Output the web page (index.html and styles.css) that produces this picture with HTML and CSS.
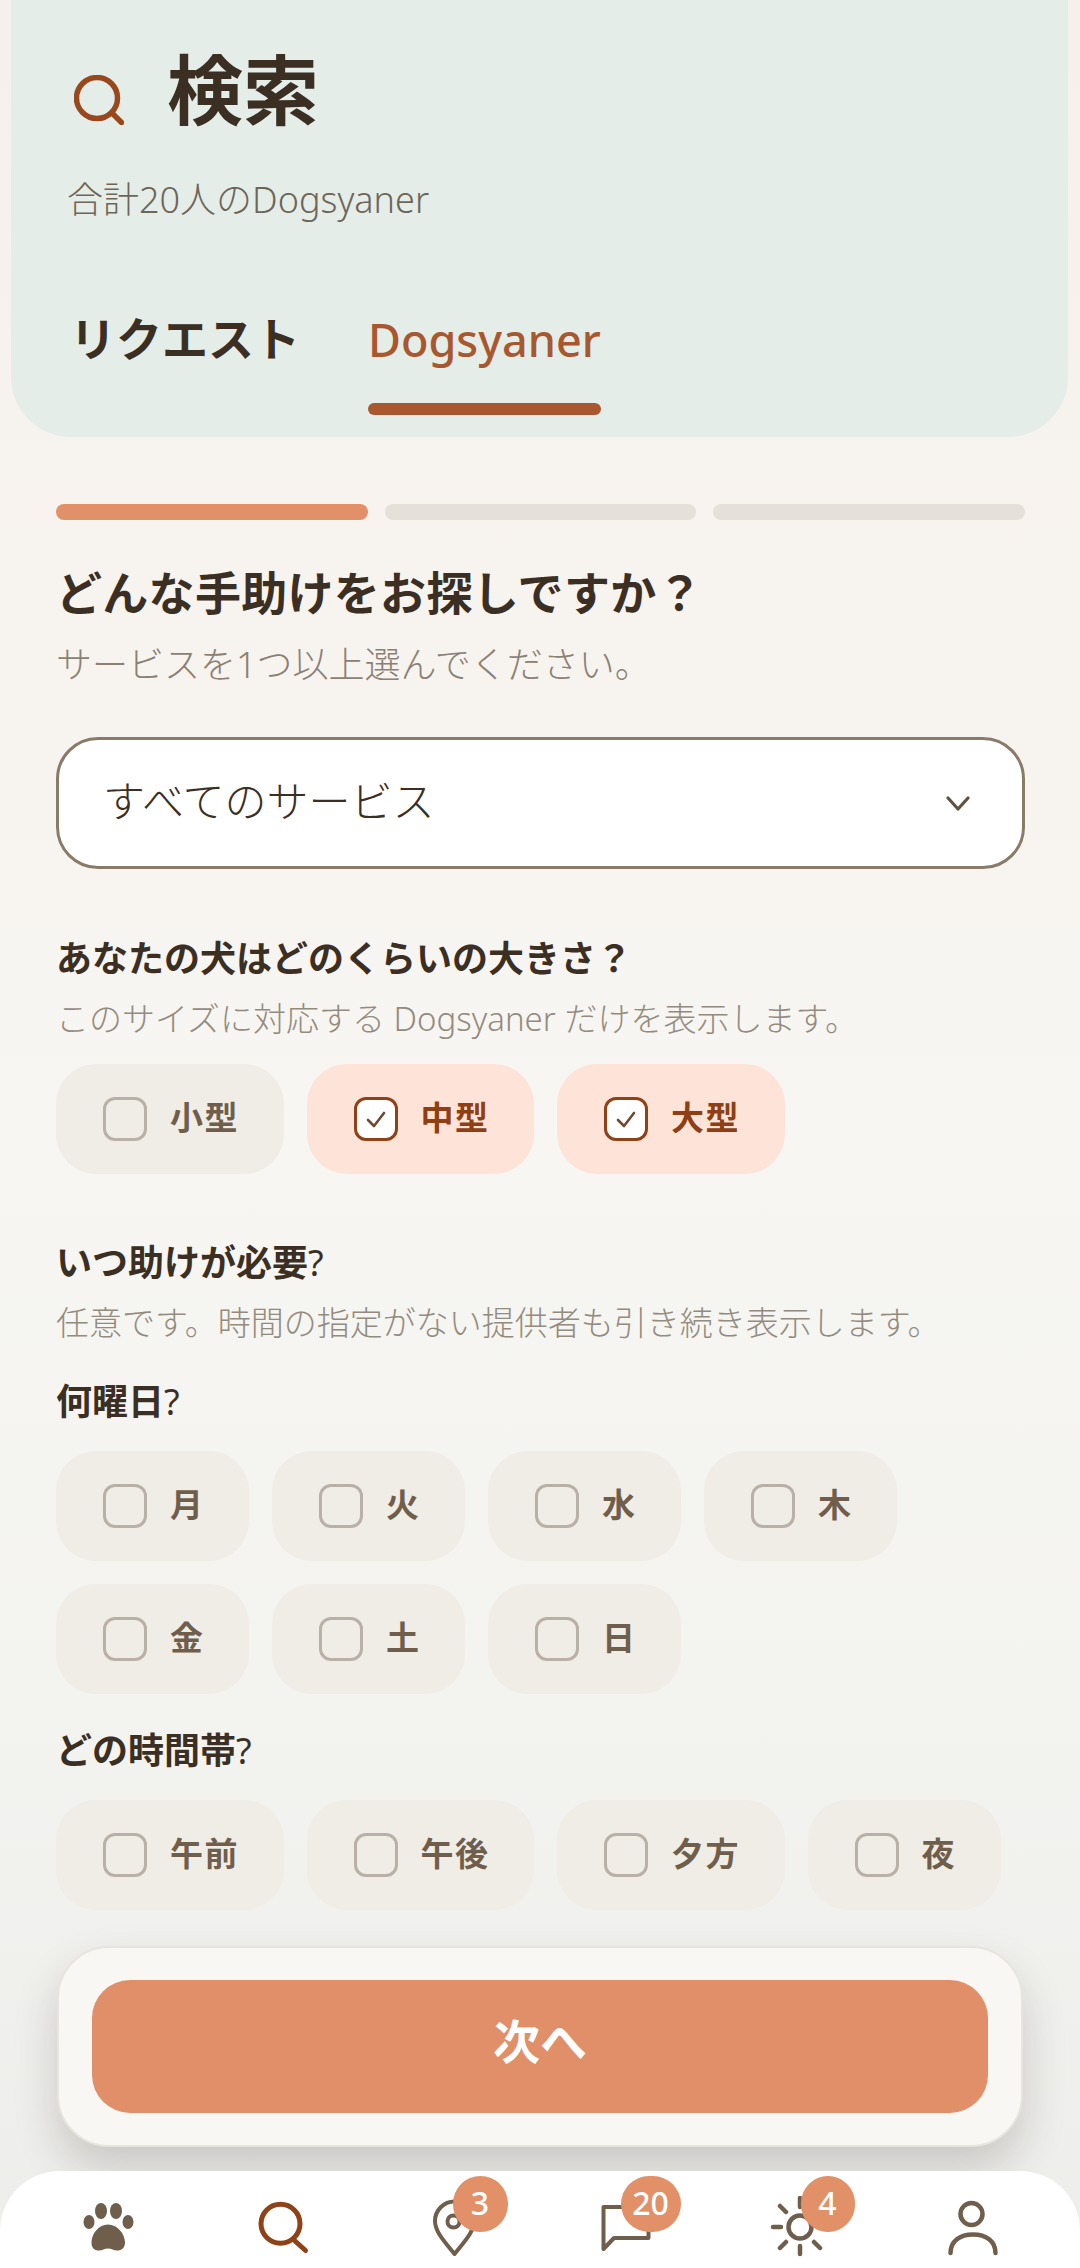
FILE: index.html
```html
<!DOCTYPE html>
<html lang="ja">
<head>
<meta charset="utf-8">
<title>検索</title>
<link rel="stylesheet" href="styles.css">
</head>
<body>
<div class="app">
  <header class="hero">
    <div class="hero-title">
      <svg class="hero-icon" viewBox="0 0 50 50" width="50" height="50"><circle cx="23" cy="23" r="20.5" fill="none" stroke="#98481C" stroke-width="5.5"/><path d="M38 38 47.500 47.500" fill="none" stroke="#98481C" stroke-width="5.500" stroke-linecap="round"/></svg>
      <h1>検索</h1>
    </div>
    <p class="hero-sub">合計20人のDogsyaner</p>
    <div class="tabs">
      <div class="tab">リクエスト</div>
      <div class="tab tab-active">Dogsyaner</div>
    </div>
  </header>

  <main class="form">
    <div class="steps">
      <span class="step step-on"></span>
      <span class="step"></span>
      <span class="step"></span>
    </div>

    <h2 class="form-title">どんな手助けをお探しですか？</h2>
    <p class="form-sub">サービスを1つ以上選んでください。</p>

    <div class="select">
      <span class="select-value">すべてのサービス</span>
      <svg viewBox="0 0 24 15" width="24" height="15"><path d="M2 2 12 13 22 2" fill="none" stroke="#5F5345" stroke-width="3.2" stroke-linecap="round" stroke-linejoin="round"/></svg>
    </div>

    <h3 class="q q-size">あなたの犬はどのくらいの大きさ？</h3>
    <p class="hint">このサイズに対応する Dogsyaner だけを表示します。</p>
    <div class="chips chips-size">
      <label class="chip"><i class="box"></i>小型</label>
      <label class="chip chip-on"><i class="box"><svg viewBox="0 0 24 24" width="24" height="24"><path d="M4 13 10 19 20 6" fill="none" stroke="#6F4A30" stroke-width="2.6" stroke-linecap="round" stroke-linejoin="round"/></svg></i>中型</label>
      <label class="chip chip-on"><i class="box"><svg viewBox="0 0 24 24" width="24" height="24"><path d="M4 13 10 19 20 6" fill="none" stroke="#6F4A30" stroke-width="2.6" stroke-linecap="round" stroke-linejoin="round"/></svg></i>大型</label>
    </div>

    <h3 class="q q-when">いつ助けが必要<span class="qm">?</span></h3>
    <p class="hint">任意です。時間の指定がない提供者も引き続き表示します。</p>

    <h3 class="q q-day">何曜日<span class="qm">?</span></h3>
    <div class="chips chips-days">
      <label class="chip"><i class="box"></i>月</label>
      <label class="chip"><i class="box"></i>火</label>
      <label class="chip"><i class="box"></i>水</label>
      <label class="chip"><i class="box"></i>木</label>
      <label class="chip"><i class="box"></i>金</label>
      <label class="chip"><i class="box"></i>土</label>
      <label class="chip"><i class="box"></i>日</label>
    </div>

    <h3 class="q q-time">どの時間帯<span class="qm">?</span></h3>
    <div class="chips chips-time">
      <label class="chip"><i class="box"></i>午前</label>
      <label class="chip"><i class="box"></i>午後</label>
      <label class="chip"><i class="box"></i>夕方</label>
      <label class="chip"><i class="box"></i>夜</label>
    </div>

    <div class="action-card">
      <button class="next" type="button">次へ</button>
    </div>
  </main>

  <nav class="nav">
    <div class="nav-item">
      <svg viewBox="0 0 64 64" width="64" height="64" fill="#6F5E4C"><ellipse cx="13" cy="26" rx="5.5" ry="7"/><ellipse cx="25" cy="15" rx="6" ry="8"/><ellipse cx="40" cy="15" rx="6" ry="8"/><ellipse cx="52" cy="26" rx="5.5" ry="7"/><path d="M32 28.500c9 0 17 9 17 18 0 5.500-3.500 8-8 8-3.500 0-5.500-2-9-2s-5.500 2-9 2c-4.500 0-7.500-2.500-7.500-8 0-9 7.500-18 16.500-18Z"/></svg>
    </div>
    <div class="nav-item">
      <svg viewBox="0 0 64 64" width="64" height="64" fill="none" stroke="#8F4218" stroke-width="5" stroke-linecap="round"><circle cx="31.500" cy="27.700" r="19.500"/><path d="M46 45 56.500 54.500"/></svg>
    </div>
    <div class="nav-item">
      <svg viewBox="0 0 64 64" width="64" height="64" fill="none" stroke="#6F5E4C" stroke-width="4" stroke-linejoin="round"><path d="M32.500 58C23 46 13 36 13 25a19.500 19.500 0 0 1 39 0C52 36 42 46 32.500 58Z"/><circle cx="31.500" cy="25.500" r="6"/></svg>
      <span class="badge badge-pin">3</span>
    </div>
    <div class="nav-item">
      <svg viewBox="0 0 64 64" width="64" height="64" fill="none" stroke="#6F5E4C" stroke-width="4" stroke-linejoin="round"><path d="M8.500 53V11H53.500V42H19Z"/></svg>
      <span class="badge badge-chat">20</span>
    </div>
    <div class="nav-item">
      <svg viewBox="0 0 64 64" width="64" height="64" fill="none" stroke="#6F5E4C" stroke-width="4.500" stroke-linecap="round"><circle cx="32" cy="31" r="11.500"/><path d="M32 2V11M32 50V58M5 31H13M51 31H59M12 10 18 16M46 46 52 52M12 52 18 46M46 16 52 10"/></svg>
      <span class="badge badge-sun">4</span>
    </div>
    <div class="nav-item">
      <svg viewBox="0 0 64 64" width="64" height="64" fill="none" stroke="#6F5E4C" stroke-width="4.500" stroke-linecap="round"><circle cx="30.500" cy="18" r="11"/><path d="M9.500 57C9.500 45 19 38.500 32 38.500S54.500 45 54.500 57"/></svg>
    </div>
  </nav>
</div>
</body>
</html>
```
FILE: styles.css
```css
* { box-sizing: border-box; }

html, body { margin: 0; padding: 0; }

body {
  width: 1080px;
  height: 2268px;
  overflow: hidden;
  font-family: "Noto Sans", "Noto Sans CJK JP", sans-serif;
  color: #3B2F24;
  background: linear-gradient(180deg, #F6F0EC 0%, #F7F3EF 25%, #F7F6F2 50%, #F3F3F0 75%, #EDEDEB 100%);
}

.app { display: flex; flex-direction: column; height: 2268px; }

h1, h2, h3, p { margin: 0; }

/* Header panel */
.hero {
  margin: 0 12px 0 11px;
  height: 437px;
  padding: 50px 0 0 56px;
  background: #E5EDE8;
  border-radius: 0 0 60px 60px;
}

.hero-title { display: flex; align-items: center; gap: 43px; height: 80px; padding-left: 7px; }
.hero-icon { margin-top: 20px; }
.hero-title h1 { font-size: 76px; font-weight: 700; line-height: 80px; }

.hero-sub { margin-top: 45px; font-size: 36px; line-height: 50px; font-weight: 300; color: #6E6558; }

.tabs { display: flex; gap: 68px; margin-top: 83px; padding-left: 3px; }
.tab { height: 107px; font-size: 46px; line-height: 60px; font-weight: 700; position: relative; }
.tab-active { font-size: 45px; line-height: 64px; font-weight: 500; color: #A9572E; }
.tab-active::after {
  content: "";
  position: absolute;
  left: 0;
  right: 0;
  top: 95px;
  height: 12px;
  border-radius: 6px;
  background: #A9572E;
}

/* Form column */
.form { flex: 1; padding: 67px 55px 0 56px; }

.steps { display: grid; grid-template-columns: repeat(3, 1fr); gap: 17px; }
.step { height: 16px; border-radius: 8px; background: #E6E1D8; }
.step-on { background: #E29068; }

.form-title { margin-top: 42px; font-size: 46px; line-height: 60px; font-weight: 700; letter-spacing: 0.3px; }
.form-sub { margin-top: 18px; font-size: 36px; line-height: 50px; font-weight: 300; color: #8A8174; }

.select {
  display: flex;
  align-items: center;
  justify-content: space-between;
  margin-top: 47px;
  height: 132px;
  padding: 0 52px 0 44px;
  background: #FFFFFF;
  border: 3px solid #8A7B68;
  border-radius: 42px;
  font-family: "Noto Sans CJK JP", sans-serif;
  font-size: 42px;
  font-weight: 300;
}
.select-value { margin-bottom: 10px; }

.q { font-size: 36px; line-height: 50px; font-weight: 700; }
.q-size { margin-top: 65px; }
.q-when { margin-top: 64px; }
.q-day { margin-top: 32px; }
.q-time { margin-top: 32px; }
.qm { font-weight: 400; }

.hint { margin-top: 13px; font-size: 33px; line-height: 44px; font-weight: 300; color: #948B7F; }

/* Option chips */
.chips { display: flex; flex-wrap: wrap; gap: 23px; margin-top: 23px; }
.chips-days, .chips-time { margin-top: 24px; }

.chip {
  display: flex;
  align-items: center;
  gap: 23px;
  height: 110px;
  padding: 0 44.5px 6px 47px;
  border-radius: 40px;
  background: #F0ECE6;
  font-family: "Noto Sans CJK JP", sans-serif;
  font-size: 33px;
  letter-spacing: 1.5px;
  font-weight: 700;
  color: #6F5E4C;
}
.chip-on { background: #FEE4D8; color: #8F3F14; }

.box {
  display: flex;
  align-items: center;
  justify-content: center;
  width: 44px;
  height: 44px;
  margin-bottom: -6px;
  border: 3px solid #B9B1A7;
  border-radius: 12px;
}
.chip-on .box { border-color: #8F4218; background: #FFFFFF; }

/* Sticky action */
.action-card {
  margin: 36px 2px 0 1px;
  height: 201px;
  padding: 32px 33px;
  background: #F8F7F3;
  border: 2px solid #E8E5DE;
  border-radius: 52px;
  box-shadow: 0 22px 44px rgba(60, 50, 40, 0.2);
}

.next {
  display: block;
  width: 100%;
  height: 133px;
  border: 0;
  border-radius: 38px;
  background: #E08F69;
  color: #FFFFFF;
  font-family: "Noto Sans CJK JP", sans-serif;
  font-size: 47px;
  font-weight: 700;
  padding: 0 0 16px;
}

/* Bottom navigation */
.nav {
  position: relative;
  display: grid;
  grid-template-columns: repeat(6, 1fr);
  height: 97px;
  padding: 25px 21px 0;
  background: #FFFFFF;
  border-radius: 60px 60px 0 0;
}

.nav-item { position: relative; display: flex; justify-content: center; }

.badge {
  position: absolute;
  top: -20px;
  height: 56px;
  border-radius: 28px;
  background: #E29068;
  color: #FFFFFF;
  font-size: 32px;
  line-height: 54px;
  font-weight: 500;
  text-align: center;
}
.badge-pin { left: calc(50% - 1px); width: 55px; }
.badge-chat { left: calc(50% - 6px); width: 60px; }
.badge-sun { left: calc(50% + 1px); width: 54px; }
```
